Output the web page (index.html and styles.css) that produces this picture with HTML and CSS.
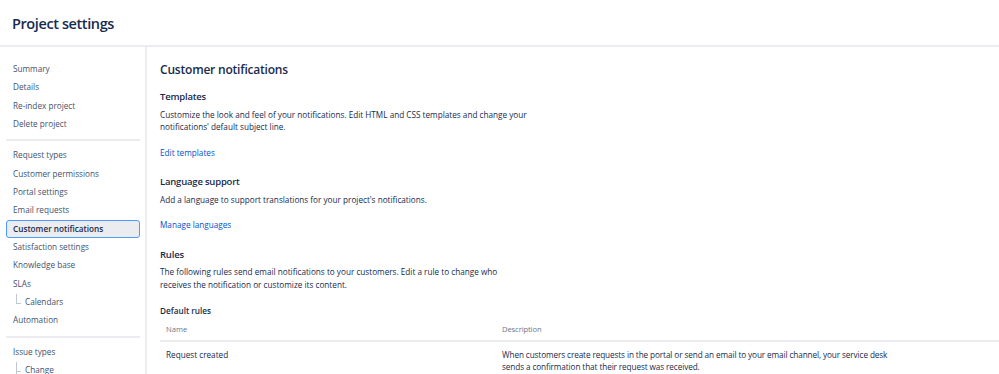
FILE: index.html
```html
<!DOCTYPE html>
<html lang="en">
<head>
<meta charset="utf-8">
<title>Project settings</title>
<link rel="stylesheet" href="styles.css">
</head>
<body>
<header class="page-header">
  <h1 class="page-title">Project settings</h1>
</header>
<div class="layout">
  <nav class="sidebar">
    <ul class="nav-group">
      <li class="nav-item">Summary</li>
      <li class="nav-item">Details</li>
      <li class="nav-item">Re-index project</li>
      <li class="nav-item">Delete project</li>
    </ul>
    <hr class="nav-divider">
    <ul class="nav-group">
      <li class="nav-item">Request types</li>
      <li class="nav-item">Customer permissions</li>
      <li class="nav-item">Portal settings</li>
      <li class="nav-item">Email requests</li>
      <li class="nav-item active">Customer notifications</li>
      <li class="nav-item">Satisfaction settings</li>
      <li class="nav-item">Knowledge base</li>
      <li class="nav-item">SLAs</li>
      <li class="nav-item sub last">Calendars</li>
      <li class="nav-item">Automation</li>
    </ul>
    <hr class="nav-divider">
    <ul class="nav-group">
      <li class="nav-item">Issue types</li>
      <li class="nav-item sub">Change</li>
    </ul>
  </nav>
  <main class="content">
    <h2 class="content-title">Customer notifications</h2>
    <section class="section">
      <h3 class="section-title">Templates</h3>
      <p class="section-text">Customize the look and feel of your notifications. Edit HTML and CSS templates and change your notifications' default subject line.</p>
      <a class="section-link" href="#">Edit templates</a>
    </section>
    <section class="section">
      <h3 class="section-title">Language support</h3>
      <p class="section-text">Add a language to support translations for your project's notifications.</p>
      <a class="section-link" href="#">Manage languages</a>
    </section>
    <section class="section">
      <h3 class="section-title">Rules</h3>
      <p class="section-text narrow">The following rules send email notifications to your customers. Edit a rule to change who receives the notification or customize its content.</p>
      <h4 class="sub-title">Default rules</h4>
      <div class="rules-table">
        <div class="rules-head">
          <div class="col-name">Name</div>
          <div class="col-desc">Description</div>
        </div>
        <div class="rules-row">
          <div class="col-name">Request created</div>
          <div class="col-desc">When customers create requests in the portal or send an email to your email channel, your service desk sends a confirmation that their request was received.</div>
        </div>
      </div>
    </section>
  </main>
</div>
</body>
</html>
```
FILE: styles.css
```css
* { box-sizing: border-box; }
html, body { margin: 0; padding: 0; }
body {
  font-family: "Open Sans", "Noto Sans", "Liberation Sans", sans-serif;
  color: #172b4d;
  background: #fff;
  font-size: 8.2px;
}
.page-header {
  height: 47px;
  border-bottom: 2px solid #ebecf0;
  padding: 0 12px 0 12px;
  display: flex;
  align-items: center;
}
.page-title {
  margin: 2px 0 0;
  font-size: 14.5px;
  font-weight: 600;
  letter-spacing: -0.4px;
  color: #172b4d;
}
.layout {
  display: flex;
  height: 327px;
}
.sidebar {
  width: 147px;
  flex: none;
  border-right: 2px solid #ebecf0;
  padding: 13px 5px 0 6px;
}
.nav-group { list-style: none; margin: 0; padding: 0; }
.nav-item {
  height: 18.33px;
  line-height: 16.33px;
  padding-left: 6px;
  color: #42526e;
  font-size: 8.2px;
  border-radius: 3px;
  border: 1px solid transparent;
}
.nav-item.active {
  background: #ebecf0;
  border-color: #4c9aff;
  color: #172b4d;
  font-weight: 600;
}
.nav-item.sub {
  padding-left: 18px;
  position: relative;
}
.nav-item.sub::before {
  content: "";
  position: absolute;
  left: 9px;
  top: 0;
  height: 9px;
  width: 4px;
  border-left: 1px solid #c1c7d0;
  border-bottom: 1px solid #c1c7d0;
}
.nav-item.sub:not(.last)::after {
  content: "";
  position: absolute;
  left: 9px;
  top: 9px;
  bottom: -6px;
  border-left: 1px solid #c1c7d0;
}
.nav-divider {
  border: 0;
  border-top: 2px solid #ebecf0;
  margin: 6px 0 5px 0;
}
.content {
  flex: 1;
  padding: 14px 0 0 13px;
}
.content-title {
  margin: 0 0 11px;
  font-size: 12px;
  font-weight: 600;
  letter-spacing: -0.2px;
  line-height: 18px;
}
.section { margin: 0 0 16.5px; }
.section-title {
  margin: 0 0 4.5px;
  font-size: 9.5px;
  font-weight: 600;
  letter-spacing: -0.2px;
  line-height: 14px;
}
.section-text {
  margin: 0 0 12px;
  max-width: 372px;
  line-height: 12.5px;
}
.section-text.narrow { max-width: 340px; margin-bottom: 13px; }
.section-link {
  display: block;
  color: #0052cc;
  text-decoration: none;
  line-height: 13px;
}
.sub-title {
  margin: 0;
  font-size: 8.2px;
  font-weight: 600;
  line-height: 13px;
}
.rules-head, .rules-row {
  display: flex;
}
.rules-head {
  border-bottom: 2px solid #ebecf0;
  color: #6b778c;
  font-size: 7.6px;
  height: 25px;
  padding-top: 1px;
  align-items: center;
}
.rules-row {
  padding-top: 6.5px;
  line-height: 12.5px;
}
.col-name { width: 342px; padding-left: 6px; flex: none; }
.col-desc { flex: none; width: 400px; letter-spacing: -0.1px; }
```
